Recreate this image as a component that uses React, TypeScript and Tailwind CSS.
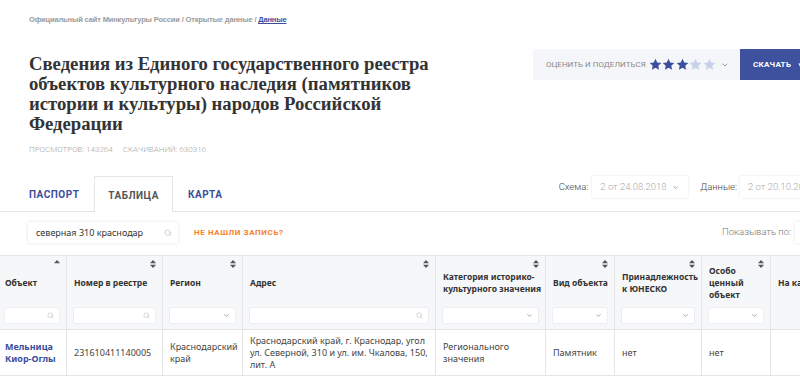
import { ChevronDown, Search } from "lucide-react";

type Col = {
  label: string;
  filter: "search" | "select" | null;
  sort: "asc" | "both" | null;
};

const columns: Col[] = [
  { label: "Объект", filter: "search", sort: "asc" },
  { label: "Номер в реестре", filter: "search", sort: "both" },
  { label: "Регион", filter: "select", sort: "both" },
  { label: "Адрес", filter: "search", sort: "both" },
  { label: "Категория историко-культурного значения", filter: "select", sort: "both" },
  { label: "Вид объекта", filter: "select", sort: "both" },
  { label: "Принадлежность к ЮНЕСКО", filter: "select", sort: "both" },
  { label: "Особо ценный объект", filter: "select", sort: "both" },
  { label: "На карте", filter: null, sort: null },
];

const row = [
  "Мельница Киор-Оглы",
  "231610411140005",
  "Краснодарский край",
  "Краснодарский край, г. Краснодар, угол ул. Северной, 310 и ул. им. Чкалова, 150, лит. А",
  "Регионального значения",
  "Памятник",
  "нет",
  "нет",
  "",
];

const SortIcon = ({ dir }: { dir: "asc" | "both" }) => (
  <svg width="6" height="8" viewBox="0 0 6 8" className="absolute top-[4px] right-[6px]">
    <path d="M0 3.3 L3 0 L6 3.3 Z" fill="#555" />
    {dir === "both" && <path d="M0 4.7 L3 8 L6 4.7 Z" fill="#555" />}
  </svg>
);

const Star = ({ filled }: { filled: boolean }) => (
  <svg width="13" height="13" viewBox="0 0 24 24">
    <path
      d="M12 1.5l3.2 6.9 7.5.8-5.6 5.1 1.6 7.4L12 17.9l-6.7 3.8 1.6-7.4L1.3 9.2l7.5-.8z"
      fill={filled ? "#3b4e9c" : "#c9d1ea"}
    />
  </svg>
);

const Filter = ({ kind }: { kind: "search" | "select" }) => (
  <div className="h-[15px] bg-white rounded-[2px] shadow-[0_0_0_1px_#eceef1] flex items-center justify-end pr-[5px]">
    {kind === "search" ? (
      <Search size={7} strokeWidth={2} className="text-[#bbb]" />
    ) : (
      <ChevronDown size={7} strokeWidth={2.5} className="text-[#888]" />
    )}
  </div>
);

export default function App() {
  return (
    <div className="w-[800px] h-[389px] overflow-hidden bg-white">
      <div className="w-[840px] pl-[29px]">
        <div className="pt-[15px] text-[7.5px] leading-[10px] font-bold tracking-[-0.15px] text-[#9b9b9b] font-['Liberation_Sans',sans-serif]">
          Официальный сайт Минкультуры России / Открытые данные /{" "}
          <span className="text-[#3b4e9c] underline">Данные</span>
        </div>

        <div className="mt-[24px] flex items-start">
          <div className="w-[504px] pt-[5px]">
            <h1 className="w-[440px] text-[18.7px] leading-[20px] font-bold text-[#333] font-['Liberation_Serif',serif]">
              Сведения из Единого государственного реестра объектов культурного наследия (памятников истории и культуры) народов Российской Федерации
            </h1>
          </div>
          <div className="w-[207px] h-[31px] bg-[#f4f6f9] flex items-center pl-[13px] font-['Roboto',sans-serif]">
            <span className="text-[8px] text-[#8a8a8a]">ОЦЕНИТЬ И ПОДЕЛИТЬСЯ</span>
            <div className="ml-[3px] flex gap-[0.5px]">
              <Star filled />
              <Star filled />
              <Star filled />
              <Star filled={false} />
              <Star filled={false} />
            </div>
            <ChevronDown size={8} strokeWidth={2.5} className="ml-[5px] text-[#888]" />
          </div>
          <div className="w-[80px] h-[31px] bg-[#3e519f] flex items-center pl-[13px] gap-[6px] text-white font-['Roboto',sans-serif]">
            <span className="text-[8px] font-bold tracking-[0.3px]">СКАЧАТЬ</span>
            <span className="text-[6px]">▼</span>
          </div>
        </div>

        <div className="mt-[11px] text-[8px] leading-[10px] font-light text-[#a9a9a9] font-['Roboto',sans-serif] flex gap-[10px]">
          <span>ПРОСМОТРОВ: 143264</span>
          <span>СКАЧИВАНИЙ: 630316</span>
        </div>
      </div>

      <div className="mt-[21px] border-b border-[#e5e5e5] h-[36px]">
        <div className="w-[836px] pl-[16px] flex items-start font-['Roboto',sans-serif]">
          <div className="flex gap-[2px] text-[10px] font-bold tracking-[0.5px]">
            <div className="h-[35px] pt-[1px] px-[13px] flex items-center text-[#3b4e9c]">ПАСПОРТ</div>
            <div className="h-[36px] pt-[1px] px-[13px] flex items-center text-[#555] bg-white border border-b-0 border-[#e5e5e5]">ТАБЛИЦА</div>
            <div className="h-[35px] pt-[1px] px-[13px] flex items-center text-[#3b4e9c]">КАРТА</div>
          </div>
          <div className="ml-auto flex items-center text-[9.5px]">
            <span className="text-[#444] font-light">Схема:</span>
            <div className="ml-[4px] w-[96px] h-[22px] bg-white shadow-[0_0_2px_rgba(0,0,0,0.12)] flex items-center pl-[8px] gap-[5px] text-[#aaa] font-light">
              2 от 24.08.2018
              <ChevronDown size={7} strokeWidth={2.5} className="text-[#888]" />
            </div>
            <span className="ml-[12px] text-[#444] font-light">Данные:</span>
            <div className="ml-[3px] w-[96px] h-[22px] bg-white shadow-[0_0_2px_rgba(0,0,0,0.12)] flex items-center pl-[8px] gap-[5px] text-[#aaa] font-light">
              2 от 20.10.2018
              <ChevronDown size={7} strokeWidth={2.5} className="text-[#888]" />
            </div>
          </div>
        </div>
      </div>

      <div className="w-[836px] pl-[28px] mt-[10px] flex items-center">
        <div className="w-[150px] h-[21px] bg-white shadow-[0_0_3px_rgba(0,0,0,0.13)] flex items-center pl-[8px] pr-[6px] justify-between">
          <span className="text-[9px] text-[#333] font-['Noto_Sans',sans-serif]">северная 310 краснодар</span>
          <Search size={8} strokeWidth={2} className="text-[#bbb]" />
        </div>
        <span className="ml-[16px] text-[8px] font-bold tracking-[0.6px] text-[#f5822f] font-['Roboto',sans-serif]">
          НЕ НАШЛИ ЗАПИСЬ?
        </span>
        <div className="ml-auto flex items-center font-['Roboto',sans-serif]">
          <span className="text-[9.5px] text-[#777] font-light">Показывать по:</span>
          <div className="ml-[4px] w-[41px] h-[21px] bg-white shadow-[0_0_3px_rgba(0,0,0,0.13)]" />
        </div>
      </div>

      <div className="mt-[12px] w-[880px] font-['Noto_Sans',sans-serif]">
        <div className="grid grid-cols-[67px_96px_80px_193px_110px_69px_87px_69px_109px] border-t border-b border-[#e3e5e8] bg-[#f6f7f9]">
          {columns.map((c, i) => (
            <div
              key={c.label}
              className={`relative border-r border-[#e3e5e8] pt-[5px] pb-[6px] ${i === 0 ? "pl-[5px] pr-[7px]" : "px-[7px]"}`}
            >
              {c.sort && <SortIcon dir={c.sort} />}
              <div className="h-[44px] -mr-[5px] flex items-center text-[8.5px] leading-[12px] font-bold text-[#333]">
                {c.label}
              </div>
              <div className="mt-[3px] h-[15px]">{c.filter && <Filter kind={c.filter} />}</div>
            </div>
          ))}
        </div>
        <div className="grid grid-cols-[67px_96px_80px_193px_110px_69px_87px_69px_109px] border-b border-[#e3e5e8]">
          {row.map((v, i) => (
            <div
              key={i}
              className={`h-[45px] flex items-center border-r border-[#e3e5e8] text-[9px] leading-[12px] ${i === 0 ? "pl-[5px] pr-[7px] font-bold text-[#3b4e9c]" : "px-[7px] text-[#444]"}`}
            >
              {v}
            </div>
          ))}
        </div>
      </div>
    </div>
  );
}
